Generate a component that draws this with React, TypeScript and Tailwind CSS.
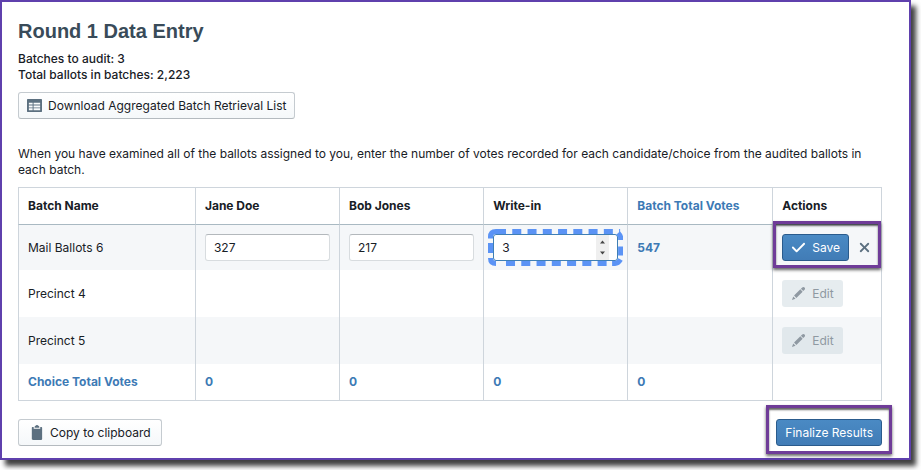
import type { ReactNode } from 'react'

const paths = {
  tick: 'M14 3c-.28 0-.53.11-.71.29L6 10.59l-3.29-3.3a1.003 1.003 0 00-1.42 1.42l4 4c.18.18.43.29.71.29s.53-.11.71-.29l8-8A1.003 1.003 0 0014 3z',
  cross:
    'M9.41 8l3.29-3.29c.19-.18.3-.43.3-.71a1.003 1.003 0 00-1.71-.71L8 6.59l-3.29-3.3a1.003 1.003 0 00-1.42 1.42L6.59 8 3.3 11.29c-.19.18-.3.43-.3.71a1.003 1.003 0 001.71.71L8 9.41l3.29 3.29c.18.19.43.3.71.3a1.003 1.003 0 00.71-1.71L9.41 8z',
  edit: 'M3.25 10.26l2.47 2.47 6.69-6.69-2.46-2.48-6.7 6.7zM.99 14.99l3.86-1.39-2.46-2.44L.99 14.99zm12.25-14c-.48 0-.92.2-1.24.51l-1.44 1.44 2.47 2.47 1.44-1.44c.32-.32.51-.75.51-1.24.01-.95-.77-1.74-1.74-1.74z',
  clipboard:
    'M11 2c0-.55-.45-1-1-1h.22C9.88.4 9.24 0 8.5 0S7.12.4 6.78 1H7c-.55 0-1 .45-1 1v1h5V2zm2 0h-1v2H5V2H4c-.55 0-1 .45-1 1v12c0 .55.45 1 1 1h9c.55 0 1-.45 1-1V3c0-.55-.45-1-1-1z',
  table:
    'M15 1H1c-.6 0-1 .5-1 1v12c0 .6.4 1 1 1h14c.6 0 1-.4 1-1V2c0-.5-.4-1-1-1zM6 13H2v-2h4v2zm0-3H2V8h4v2zm0-3H2V5h4v2zm8 6H7v-2h7v2zm0-3H7V8h7v2zm0-3H7V5h7v2z',
}

function Icon({ name, className = '' }: { name: keyof typeof paths; className?: string }) {
  return (
    <svg viewBox="0 0 16 16" className={`size-[15px] shrink-0 fill-current ${className}`} aria-hidden="true">
      <path d={paths[name]} />
    </svg>
  )
}

const buttonStyles = {
  plain: 'border-[#c5cbd0] border-b-[#b4babf] bg-linear-to-b from-white to-[#f5f8fa] text-[#182026]',
  primary: 'border-[#2a5b8c] bg-linear-to-b from-[#4a8ac4] to-[#417cb6] text-white',
  disabled: 'border-transparent bg-[#ced9e0]/50 bg-clip-border text-[#8f99a2]',
}

function Button({
  kind,
  disabled,
  padding = 'px-2',
  children,
}: {
  kind: keyof typeof buttonStyles
  disabled?: boolean
  padding?: string
  children: ReactNode
}) {
  return (
    <button
      type="button"
      disabled={disabled}
      className={`inline-flex h-[27px] items-center gap-1.5 rounded-[3px] border whitespace-nowrap ${padding} ${buttonStyles[kind]}`}
    >
      {children}
    </button>
  )
}

function Callout({ className }: { className: string }) {
  return (
    <div
      className={`pointer-events-none absolute border-3 border-[#6f3c98] shadow-[0_2px_3px_rgba(0,0,0,0.6),inset_0_2px_2px_rgba(0,0,0,0.6)] ${className}`}
    />
  )
}

function VoteInput({ label, value, active }: { label: string; value: number; active?: boolean }) {
  return (
    <div className="relative">
      <input
        type="number"
        aria-label={label}
        defaultValue={value}
        className={`block h-[27px] w-full appearance-none rounded-[3px] border bg-white px-2 outline-none [&::-webkit-inner-spin-button]:appearance-none ${
          active ? 'border-[#3f7fb5]' : 'border-[#d8dcdf] border-t-[#b3b8bc]'
        }`}
      />
      {active && (
        <>
          <svg className="absolute top-px right-[9px] h-[25px] w-[13px]" viewBox="0 0 13 25" aria-hidden="true">
            <path d="M0 0h13v25H0z" fill="#efefef" />
            <path d="M4 8.5L6.5 5.5 9 8.5zM4 16.5L6.5 19.5 9 16.5z" fill="#454545" />
          </svg>
          <svg
            className="pointer-events-none absolute -inset-[5px] h-[37px] w-[calc(100%+10px)]"
            viewBox="0 0 135 37"
            preserveAspectRatio="none"
            aria-hidden="true"
          >
            <g fill="none" stroke="#5b93f5" strokeWidth="5">
              <path d="M18 2.5H132" strokeDasharray="9 6.25" strokeDashoffset="-6.25" />
              <path d="M18 34.5H120" strokeDasharray="9 6.25" />
              <path d="M2.5 14V24M132.5 17.5V26.5M2.5 9.5V8Q2.5 2.5 8 2.5H18M2.5 29Q2.5 34.5 8 34.5M132.5 11V8Q132 6 130 4M132.5 30.5Q130 34.5 127 34.5H124" />
            </g>
          </svg>
        </>
      )}
    </div>
  )
}

const candidates = [
  { name: 'Jane Doe', votes: 327 },
  { name: 'Bob Jones', votes: 217 },
  { name: 'Write-in', votes: 3 },
]
const cell = 'border-l border-[#ced5dc] px-[9px] text-left'
const headCell = `${cell} border-b border-b-[#a9b9c2]`

export default function App() {
  return (
    <div className="bg-white pr-2.5 pb-2.5 font-[Inter,'Liberation_Sans',sans-serif] text-[12px] leading-4 text-[#182026]">
      <main className="border-2 border-[#5f40ad] bg-white pt-[17px] pr-[27px] pb-3 pl-4 shadow-[5px_6px_5px_rgba(0,0,0,0.75)]">
        <h1 className="font-['Liberation_Sans',Arial,sans-serif] text-[20px] leading-6 font-bold text-[#394b59]">Round 1 Data Entry</h1>
        <p className="mt-2 font-medium">
          Batches to audit: 3
          <br />
          Total ballots in batches: 2,223
        </p>
        <div className="mt-[9px] flex">
          <Button kind="plain">
            <Icon name="table" className="text-[#5c7080]" />
            Download Aggregated Batch Retrieval List
          </Button>
        </div>
        <p className="mt-[27px]">
          When you have examined all of the ballots assigned to you, enter the number of votes recorded for each
          candidate/choice from the audited ballots in each batch.
        </p>
        <table className="mt-[9px] w-full table-fixed border-separate border-spacing-0 border border-l-0 border-[#ced5dc]">
          <colgroup>
            <col className="w-[20.5%]" />
            <col className="w-[16.7%]" />
            <col className="w-[16.7%]" />
            <col className="w-[16.7%]" />
            <col className="w-[16.8%]" />
            <col />
          </colgroup>
          <thead>
            <tr className="h-[37px]">
              <th className={headCell}>Batch Name</th>
              {candidates.map((c) => (
                <th key={c.name} className={headCell}>
                  {c.name}
                </th>
              ))}
              <th className={`${headCell} text-[#3d7ab5]`}>Batch Total Votes</th>
              <th className={headCell}>Actions</th>
            </tr>
          </thead>
          <tbody>
            <tr className="h-[45px] bg-[#f5f7f9]">
              <td className={cell}>Mail Ballots 6</td>
              {candidates.map((c) => (
                <td key={c.name} className={cell}>
                  <VoteInput label={c.name} value={c.votes} active={c.name === 'Write-in'} />
                </td>
              ))}
              <td className={`${cell} font-bold text-[#3d7ab5]`}>547</td>
              <td className={`${cell} relative`}>
                <div className="flex items-center gap-2">
                  <Button kind="primary">
                    <Icon name="tick" />
                    Save
                  </Button>
                  <button type="button" aria-label="Cancel" className="text-[#5c7080]">
                    <Icon name="cross" />
                  </button>
                </div>
                <Callout className="-top-1 right-0 bottom-0.5 left-0" />
              </td>
            </tr>
            {['Precinct 4', 'Precinct 5'].map((name) => (
              <tr key={name} className="h-[47px] even:bg-white odd:bg-[#f5f7f9]">
                <td className={cell}>{name}</td>
                <td className={cell} />
                <td className={cell} />
                <td className={cell} />
                <td className={cell} />
                <td className={cell}>
                  <Button kind="disabled" disabled>
                    <Icon name="edit" />
                    Edit
                  </Button>
                </td>
              </tr>
            ))}
          </tbody>
          <tfoot>
            <tr className="h-9 font-bold text-[#3d7ab5]">
              <td className={cell}>Choice Total Votes</td>
              <td className={cell}>0</td>
              <td className={cell}>0</td>
              <td className={cell}>0</td>
              <td className={cell}>0</td>
              <td className={cell} />
            </tr>
          </tfoot>
        </table>
        <div className="mt-[18px] flex justify-between">
          <Button kind="plain" padding="px-2.5">
            <Icon name="clipboard" className="text-[#5c7080]" />
            Copy to clipboard
          </Button>
          <div className="relative">
            <Button kind="primary">Finalize Results</Button>
            <Callout className="-top-3.5 -right-2.5 -bottom-2 -left-2.5" />
          </div>
        </div>
      </main>
    </div>
  )
}
